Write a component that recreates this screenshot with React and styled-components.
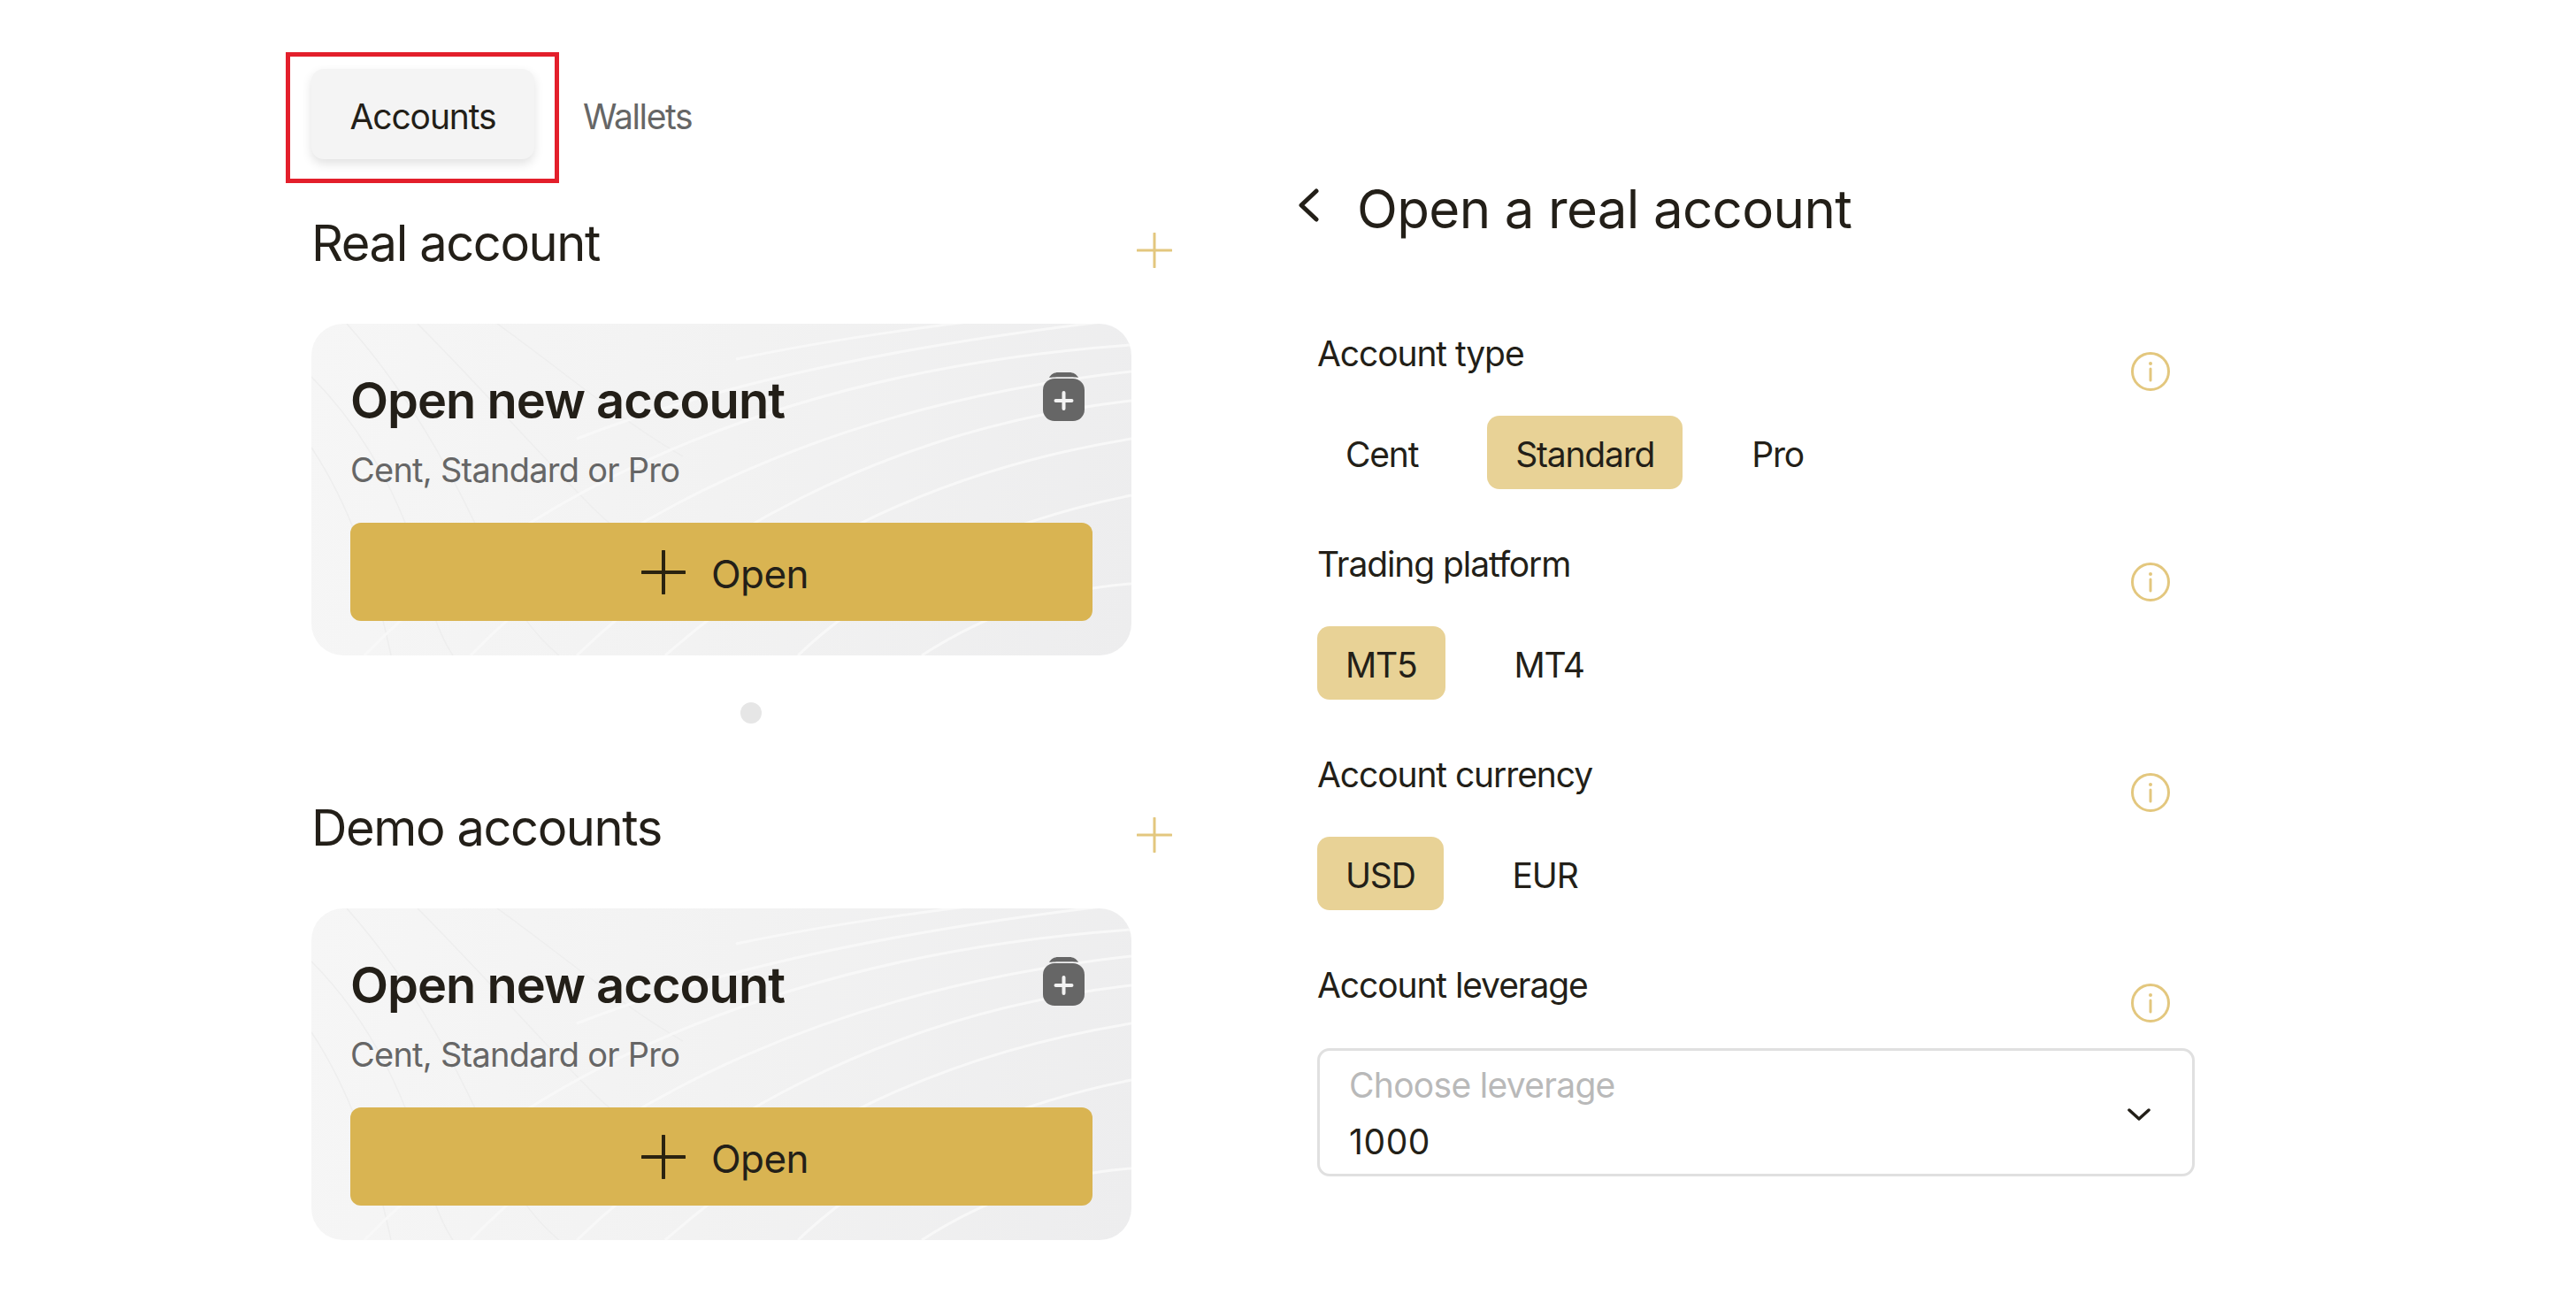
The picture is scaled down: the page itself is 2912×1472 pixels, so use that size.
import React from 'react';
import styled, { createGlobalStyle } from 'styled-components';

const GlobalStyle = createGlobalStyle`
    html, body {
        margin: 0;
        padding: 0;
        background: #fff;
    }
    body {
        font-family: Inter, "Liberation Sans", sans-serif;
        color: #231f18;
    }
`;

const Page = styled.div`
    display: flex;
    width: 2912px;
    height: 1472px;
    box-sizing: border-box;
    padding: 78px 0 0 352px;
    overflow: hidden;
`;

const LeftColumn = styled.div`
    width: 973px;
    flex: none;
`;

const RightColumn = styled.div`
    margin-left: 139px;
    width: 1017px;
    flex: none;
    padding-top: 123px;
`;

const Tabs = styled.div`
    display: flex;
    align-items: center;
    height: 102px;
`;

const ActiveTab = styled.div`
    position: relative;
    width: 252px;
    height: 102px;
    box-sizing: border-box;
    padding-top: 5px;
    display: flex;
    align-items: center;
    justify-content: center;
    background: #f4f4f4;
    border-radius: 14px;
    box-shadow: 0 5px 12px rgba(0, 0, 0, 0.12);
    font-size: 39px;
    letter-spacing: -1.1px;
`;

const Highlight = styled.span`
    position: absolute;
    top: -19px;
    left: -29px;
    right: -28px;
    bottom: -27px;
    border: 5px solid #e31f2b;
`;

const Tab = styled.div`
    margin: 5px 0 0 55px;
    font-size: 39px;
    letter-spacing: -1.4px;
    color: #666;
`;

const SectionHead = styled.div`
    display: flex;
    justify-content: space-between;
    align-items: center;
    height: 70px;
    margin-top: ${p => p.$top}px;
    margin-bottom: 56px;
    svg {
        margin-top: 16px;
    }
`;

const Heading = styled.h2`
    margin: 0;
    font-size: 56px;
    line-height: 70px;
    font-weight: 400;
    letter-spacing: -1.4px;
`;

const Card = styled.div`
    position: relative;
    width: 927px;
    height: 375px;
    box-sizing: border-box;
    padding: 56px 44px 39px;
    border-radius: 36px;
    background: linear-gradient(100deg, #f6f6f6 0%, #f2f2f2 50%, #ededee 100%);
    overflow: hidden;
`;

const Waves = styled.svg`
    position: absolute;
    inset: 0;
`;

const CardTop = styled.div`
    position: relative;
    display: flex;
    justify-content: space-between;
    align-items: flex-start;
`;

const CardTitle = styled.div`
    font-size: 56px;
    line-height: 62px;
    font-weight: 600;
    letter-spacing: -1px;
`;

const BagIcon = styled.svg`
    margin: -1px 9px 0 0;
`;

const CardSub = styled.div`
    position: relative;
    margin-top: 27px;
    font-size: 38px;
    line-height: 40px;
    letter-spacing: -0.75px;
    color: #666;
`;

const OpenButton = styled.div`
    position: relative;
    display: flex;
    align-items: center;
    justify-content: center;
    gap: 29px;
    height: 111px;
    margin-top: 40px;
    padding-left: 8px;
    background: #d9b452;
    border-radius: 12px;
    font-size: 44px;
    letter-spacing: -0.5px;
`;

const OpenLabel = styled.span`
    margin-top: 4px;
`;

const Dot = styled.div`
    width: 24px;
    height: 24px;
    margin: 53px 0 0 485px;
    border-radius: 50%;
    background: #e6e6e6;
`;

const TitleRow = styled.div`
    display: flex;
    align-items: center;
    height: 70px;
    gap: 43px;
    padding-left: 3px;
    svg {
        margin-top: -8px;
    }
`;

const Title = styled.h1`
    margin: 0;
    font-size: 60px;
    line-height: 70px;
    font-weight: 400;
    letter-spacing: -0.65px;
`;

const Form = styled.div`
    margin-top: 107px;
    padding-left: 25px;
`;

const Group = styled.div`
    margin-bottom: 63px;
`;

const LabelRow = styled.div`
    display: flex;
    justify-content: space-between;
    align-items: flex-start;
    width: 964px;
    height: 44px;
`;

const Label = styled.div`
    font-size: 39px;
    line-height: 43px;
    letter-spacing: -1.1px;
`;

const InfoIcon = styled.svg`
    margin-top: 20px;
    flex: none;
`;

const Pills = styled.div`
    display: flex;
    gap: 46px;
    margin-top: 48px;
`;

const Pill = styled.div`
    height: 83px;
    box-sizing: border-box;
    padding: 4px 32px 0;
    display: flex;
    align-items: center;
    border-radius: 14px;
    font-size: 39px;
    letter-spacing: -1.2px;
    background: ${p => (p.$active ? '#e8d296' : 'transparent')};
`;

const Select = styled.div`
    display: flex;
    align-items: center;
    justify-content: space-between;
    width: 992px;
    height: 145px;
    margin-top: 49px;
    box-sizing: border-box;
    padding: 5px 47px 0 33px;
    border: 3px solid #e0e0e0;
    border-radius: 14px;
`;

const SelectValues = styled.div`
    display: flex;
    flex-direction: column;
    gap: 24px;
    margin-top: -2px;
    font-size: 39px;
    line-height: 40px;
    letter-spacing: -0.7px;
`;

const Placeholder = styled.span`
    color: #b9b9b9;
`;

const SelectValue = styled.span`
    letter-spacing: 0.6px;
`;

function PlusIcon({ size, color, width }) {
    return (
        <svg width={size} height={size} viewBox="0 0 40 40" fill="none">
            <path d="M20 1v38M1 20h38" stroke={color} strokeWidth={width} strokeLinecap="round" />
        </svg>
    );
}

function Info() {
    return (
        <InfoIcon width="44" height="44" viewBox="0 0 44 44" fill="none">
            <circle cx="22" cy="22" r="20.5" stroke="#e3c77e" strokeWidth="3" />
            <circle cx="22" cy="13" r="2" fill="#e3c77e" />
            <path d="M22 19v13" stroke="#e3c77e" strokeWidth="3" strokeLinecap="round" />
        </InfoIcon>
    );
}

const whiteLines = [
    'M690 375C760 330 840 300 927 294',
    'M550 375C640 290 770 225 927 194',
    'M400 375C520 270 680 170 927 130',
    'M300 375C430 250 640 120 927 87',
    'M180 375C340 210 600 90 927 54',
    'M60 375C260 170 560 50 927 24',
    'M300 130C480 60 700 20 927 -6',
    'M480 40C600 15 720 0 840 -14',
];

const greyLines = [
    'M0 60C70 130 110 220 130 300C140 340 150 360 160 375',
    'M40 0C120 90 170 190 210 280C230 320 250 350 280 375',
    'M120 0C190 70 260 150 320 210C370 260 420 270 470 250',
    'M0 140C40 200 70 280 90 375',
    'M210 0C280 50 350 110 420 150',
];

function CardWaves() {
    return (
        <Waves width="927" height="375" viewBox="0 0 927 375" fill="none">
            {greyLines.map(d => <path key={d} d={d} stroke="#eeeeee" strokeWidth="1.500" />)}
            {whiteLines.map(d => <path key={d} d={d} stroke="#f8f8f8" strokeWidth="3" />)}
        </Waves>
    );
}

function OpenCard() {
    return (
        <Card>
            <CardWaves />
            <CardTop>
                <CardTitle>Open new account</CardTitle>
                <BagIcon width="47" height="55" viewBox="0 0 47 55" fill="none">
                    <path d="M7 6C9 2 13 0 17 0h13c4 0 8 2 10 6C36 5 11 5 7 6Z" fill="#666" />
                    <rect y="7" width="47" height="48" rx="13" fill="#666" />
                    <path d="M23.500 23v18M14.500 32h18" stroke="#f2f2f2" strokeWidth="4" strokeLinecap="round" />
                </BagIcon>
            </CardTop>
            <CardSub>Cent, Standard or Pro</CardSub>
            <OpenButton>
                <PlusIcon size={50} color="#2b2310" width={3.2} />
                <OpenLabel>Open</OpenLabel>
            </OpenButton>
        </Card>
    );
}

function Options({ items, active }) {
    return (
        <Pills>
            {items.map(item => <Pill key={item} $active={item === active}>{item}</Pill>)}
        </Pills>
    );
}

export default function App() {
    return (
        <Page>
            <GlobalStyle />
            <LeftColumn>
                <Tabs>
                    <ActiveTab>Accounts<Highlight /></ActiveTab>
                    <Tab>Wallets</Tab>
                </Tabs>
                <SectionHead $top={60}>
                    <Heading>Real account</Heading>
                    <PlusIcon size={40} color="#e3c77e" width={3} />
                </SectionHead>
                <OpenCard />
                <Dot />
                <SectionHead $top={83}>
                    <Heading>Demo accounts</Heading>
                    <PlusIcon size={40} color="#e3c77e" width={3} />
                </SectionHead>
                <OpenCard />
            </LeftColumn>
            <RightColumn>
                <TitleRow>
                    <svg width="24" height="38" viewBox="0 0 24 38" fill="none">
                        <path d="M21 3L4 19l17 16" stroke="#231f18" strokeWidth="5" strokeLinecap="round" strokeLinejoin="round" />
                    </svg>
                    <Title>Open a real account</Title>
                </TitleRow>
                <Form>
                    <Group>
                        <LabelRow><Label>Account type</Label><Info /></LabelRow>
                        <Options items={['Cent', 'Standard', 'Pro']} active="Standard" />
                    </Group>
                    <Group>
                        <LabelRow><Label>Trading platform</Label><Info /></LabelRow>
                        <Options items={['MT5', 'MT4']} active="MT5" />
                    </Group>
                    <Group>
                        <LabelRow><Label>Account currency</Label><Info /></LabelRow>
                        <Options items={['USD', 'EUR']} active="USD" />
                    </Group>
                    <LabelRow><Label>Account leverage</Label><Info /></LabelRow>
                    <Select>
                        <SelectValues>
                            <Placeholder>Choose leverage</Placeholder>
                            <SelectValue>1000</SelectValue>
                        </SelectValues>
                        <svg width="26" height="16" viewBox="0 0 26 16" fill="none">
                            <path d="M2 3l11 10L24 3" stroke="#231f18" strokeWidth="3.500" strokeLinecap="round" strokeLinejoin="round" />
                        </svg>
                    </Select>
                </Form>
            </RightColumn>
        </Page>
    );
}
